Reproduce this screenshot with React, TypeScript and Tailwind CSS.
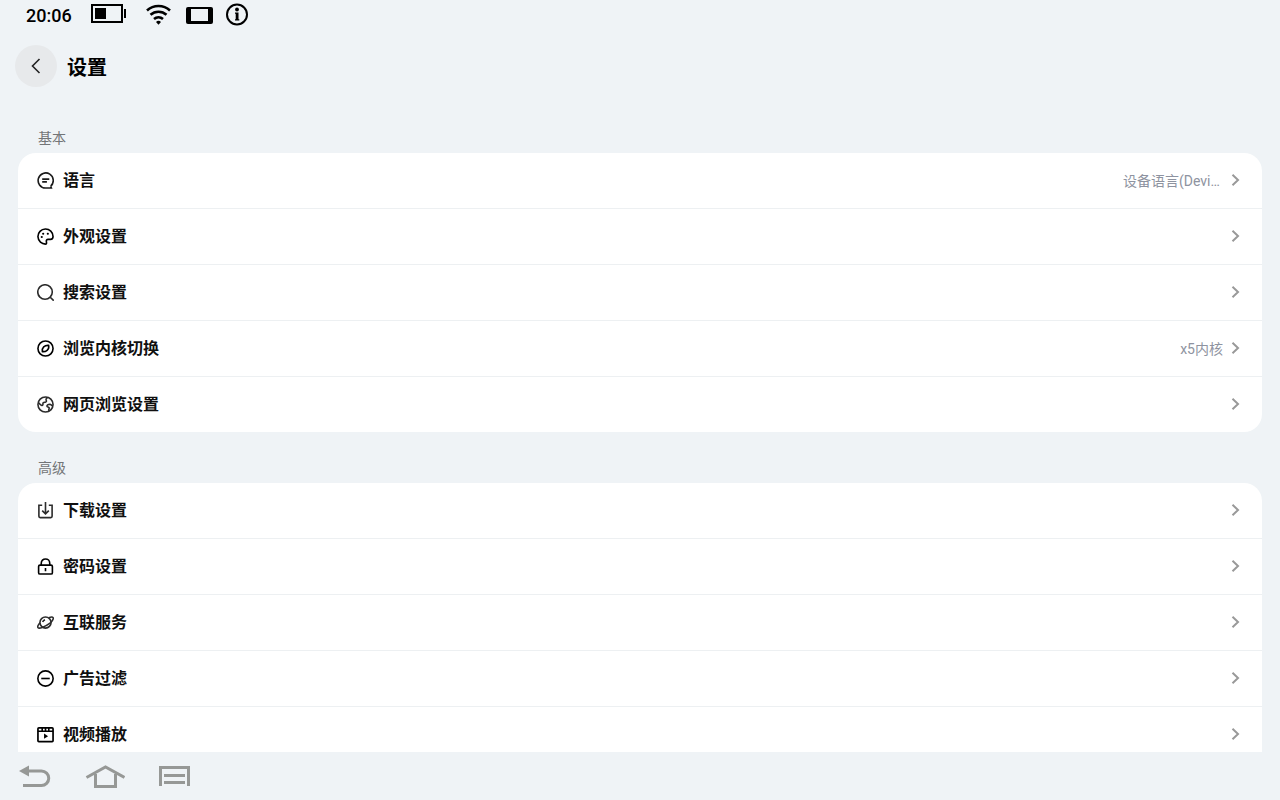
import React from 'react';

interface SettingItem {
  title: string;
  value?: string;
  icon: React.ReactNode;
}

interface SectionProps {
  title: string;
  items: SettingItem[];
  listClassName: string;
}

const basicItems: SettingItem[] = [
  {
    title: '语言',
    value: '设备语言(Device Language)',
    icon: (
      <g stroke="#1c1c1c">
        <path d="M14.500 15A8 8 0 1 0 9 17h6.200l-.8-2" />
        <path d="M5.500 7.500h7.500M5.500 10.500h5" />
      </g>
    ),
  },
  {
    title: '外观设置',
    icon: (
      <g>
        <path d="M9.500 17a8 8 0 1 1 7.500-8c0 2-1.200 3-2.700 3h-2.600c-1.400 0-2 1-1.800 2.200.2 1.300.4 2.800-.4 2.800Z" />
        <path
          d="M5 9.500h.1M6.500 6h.1M11.400 6h.1"
          strokeWidth="2.200"
          strokeLinecap="round"
        />
      </g>
    ),
  },
  {
    title: '搜索设置',
    icon: (
      <g stroke="#2c2c2c">
        <circle cx="8.500" cy="8.500" r="7.700" />
        <path d="M14 14l3.700 3.700" />
      </g>
    ),
  },
  {
    title: '浏览内核切换',
    icon: (
      <g>
        <circle cx="9" cy="9" r="8" />
        <path d="M12.300 5.700c.5 2.300-.3 4.200-1.600 5.200-1.200 1-3 1.600-5 1.400-.4-2 .2-3.800 1.400-5 1.200-1.100 3.200-1.800 5.200-1.600Z" />
      </g>
    ),
  },
  {
    title: '网页浏览设置',
    icon: (
      <g stroke="#2c2c2c">
        <circle cx="9" cy="9" r="8" />
        <path d="M1.500 7 4 9.500c1.300 1 2.500.3 2.300-1C6 7 7 6.600 8.200 6.700c1.500 0 2.300-1.200 1.500-2.200-.6-1 .3-2 1.300-3" />
        <path d="M16.800 10.500c-1.200 0-1.800-1.600-3.300-1.700-1.800 0-3.200 1-2.900 2.100.2 1 1.700.6 2.200 1.500.5 1-.6 1.800-.3 2.800l.7.900" />
      </g>
    ),
  },
];

const advancedItems: SettingItem[] = [
  {
    title: '下载设置',
    icon: (
      <g stroke="#2c2c2c">
        <path d="M5.500 3.500H2v11.700c0 .8.500 1.300 1.300 1.300h11.400c.8 0 1.300-.5 1.300-1.300V3.500h-3.500" />
        <path d="M9 0v12.500M5.500 9.200 9 12.600l3.500-3.400" />
      </g>
    ),
  },
  {
    title: '密码设置',
    icon: (
      <g>
        <rect x="1.700" y="7.500" width="14.600" height="9.500" rx="1.500" />
        <path d="M4.500 7.500V5.500a4.500 4.500 0 0 1 9 0v2M9 10.500v3.500" />
      </g>
    ),
  },
  {
    title: '互联服务',
    icon: (
      <g stroke="#2c2c2c">
        <circle cx="9" cy="9" r="5.900" />
        <path d="M12.500 3.900c2.300-.9 4-.9 4.500-.1.900 1.400-1 3.800-2.800 5.600M5.500 14.200c-2.300.9-4 .9-4.500.1-.7-1.200.4-3.200 2.200-5.100" />
        <path d="M6 8.500c.4-1.200 1.400-2 2.500-2.300M5.500 14.200c2-.6 6.500-3.200 8.700-4.800" />
      </g>
    ),
  },
  {
    title: '广告过滤',
    icon: (
      <g>
        <circle cx="9" cy="9" r="8.100" />
        <path d="M4.500 9h9" />
      </g>
    ),
  },
  {
    title: '视频播放',
    icon: (
      <g>
        <rect x="1" y="2" width="16" height="14.500" rx="1" strokeWidth="1.800" />
        <path d="M1 5.500h16M5.500 2v3.500M9 2v3.500M12.500 2v3.500" />
        <path d="M7.500 8v5.500l4.200-2.700Z" fill="black" stroke="none" />
      </g>
    ),
  },
];

const StatusBar = () => (
  <div className="flex h-8 shrink-0 items-start pl-[26px] text-black">
    <span className="w-[65px] pt-1 text-[18px] leading-6 font-medium">
      20:06
    </span>
    <svg className="mt-1" width="36" height="20" viewBox="0 0 36 20">
      <rect x="1" y="1" width="30" height="17" fill="none" stroke="black" strokeWidth="2" />
      <rect x="4" y="4" width="11" height="11" />
      <rect x="33" y="5" width="2" height="9" />
    </svg>
    <svg className="mt-1 ml-[18px]" width="28" height="22" viewBox="0 0 28 22">
      <g fill="none" stroke="black" strokeWidth="2.600">
        <path d="M2 6.500a17 17 0 0 1 23 0" />
        <path d="M5.500 10.800a12 12 0 0 1 16 0" />
        <path d="M9 15a7 7 0 0 1 9 0" />
      </g>
      <path d="M13.500 20.800 11 18a3.600 3.600 0 0 1 5 0Z" />
    </svg>
    <svg className="mt-[7px] ml-[13px]" width="28" height="18" viewBox="0 0 28 18">
      <rect width="27" height="17" rx="2" />
      <rect x="5" y="2" width="17" height="12" fill="#eff3f6" />
    </svg>
    <svg className="mt-[3px] ml-3" width="22" height="23" viewBox="0 0 22 23">
      <circle cx="11" cy="11.500" r="10" fill="none" stroke="black" strokeWidth="2" />
      <circle cx="11" cy="6.500" r="1.900" />
      <path d="M9 9.500h3.500v6.800h.8v1.200H9v-1.200h.7v-5.600H9Z" />
    </svg>
  </div>
);

const Section = ({ title, items, listClassName }: SectionProps) => (
  <section>
    <h2 className="mb-1 ml-5 text-[14px] leading-[22px] text-[#737577]">
      {title}
    </h2>
    <ul className={`overflow-hidden bg-white ${listClassName}`}>
      {items.map((item) => (
        <li
          key={item.title}
          className="border-b border-[#edf0f2] last:border-b-0"
        >
          <button
            type="button"
            className="flex h-[55px] w-full items-center pr-[22px] pl-[19px] text-left"
          >
            <svg
              width="17"
              height="17"
              viewBox="0 0 18 18"
              fill="none"
              stroke="black"
              strokeWidth="1.700"
              className="shrink-0"
            >
              {item.icon}
            </svg>
            <span className="ml-[9px] flex-1 text-[16px] leading-6 font-bold text-[#101010]">
              {item.title}
            </span>
            {item.value && (
              <span className="mr-2 max-w-[100px] truncate text-[14px] leading-5 text-[#8e93a0]">
                {item.value}
              </span>
            )}
            <svg
              width="9"
              height="13"
              viewBox="0 0 9 13"
              fill="none"
              stroke="#999999"
              strokeWidth="2"
              className="shrink-0"
            >
              <path d="M1.500.8 7 6l-5.500 5.200" />
            </svg>
          </button>
        </li>
      ))}
    </ul>
  </section>
);

const NavigationBar = () => (
  <nav className="flex h-12 shrink-0 items-center gap-[34px] pl-[19px]">
    <button type="button" aria-label="Back">
      <svg width="32" height="24" viewBox="0 0 32 24">
        <path
          d="M8 7h14.500a7.200 7.200 0 0 1 0 14.500H4"
          fill="none"
          stroke="#969896"
          strokeWidth="3"
        />
        <path d="M0 7 10 1.500v11Z" fill="#969896" />
      </svg>
    </button>
    <button type="button" aria-label="Home">
      <svg
        width="40"
        height="24"
        viewBox="0 0 40 24"
        fill="none"
        stroke="#969896"
        strokeWidth="3"
      >
        <path d="M1.500 13.500 20.500 3l19 10.500" />
        <path d="M10.500 10v12.500h20V10" />
      </svg>
    </button>
    <button type="button" aria-label="Menu">
      <svg
        width="31"
        height="24"
        viewBox="0 0 31 24"
        fill="none"
        stroke="#969896"
        strokeWidth="3"
      >
        <path d="M1.500 22V3.500h28V22" />
        <path d="M5 11.500h21M5 18.500h21" />
      </svg>
    </button>
  </nav>
);

const App = () => {
  const [kernel] = React.useState('x5内核');

  const items = basicItems.map((item) =>
    item.title === '浏览内核切换' ? { ...item, value: kernel } : item
  );

  return (
    <div className="flex h-screen flex-col bg-[#eff3f6] font-[Roboto,'Noto_Sans_CJK_SC',sans-serif]">
      <StatusBar />
      <header className="flex shrink-0 items-center gap-[10px] pt-[13px] pl-[15px]">
        <button
          type="button"
          aria-label="返回"
          className="flex size-[42px] items-center justify-center rounded-full bg-[#e7e9eb]"
        >
          <svg
            width="10"
            height="16"
            viewBox="0 0 10 16"
            fill="none"
            stroke="#222222"
            strokeWidth="1.600"
          >
            <path d="M8.500 1 1.500 8l7 7" />
          </svg>
        </button>
        <h1 className="pt-1 text-[20px] leading-7 font-bold text-black">
          设置
        </h1>
      </header>
      <main className="flex min-h-0 flex-1 flex-col gap-[25px] overflow-hidden px-[18px] pt-10">
        <Section title="基本" items={items} listClassName="rounded-[18px]" />
        <Section
          title="高级"
          items={advancedItems}
          listClassName="rounded-t-[18px]"
        />
      </main>
      <NavigationBar />
    </div>
  );
};

export default App;
